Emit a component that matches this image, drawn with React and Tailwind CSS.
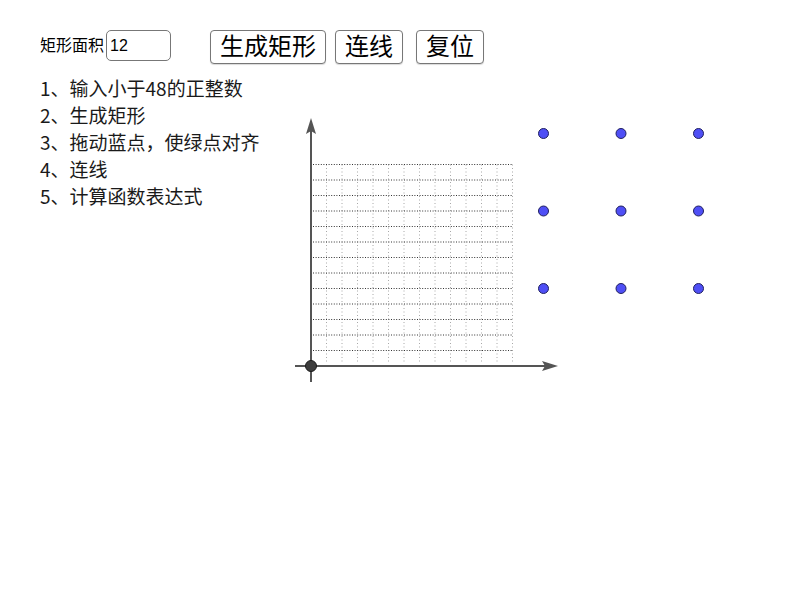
import React from 'react';

const U = 15.5;
const OX = 311;
const OY = 366;

function Graph() {
  const steps = Array.from({ length: 13 }, (_, i) => i + 1);
  const points = [];
  for (const y of [15, 10, 5]) {
    for (const x of [15, 20, 25]) points.push([OX + x * U, OY - y * U]);
  }
  return (
    <svg width="430" height="326" viewBox="290 74 430 326" className="block">
      {steps.map((k) => (
        <line
          key={'v' + k}
          x1={OX + k * U}
          y1={OY - 13 * U}
          x2={OX + k * U}
          y2={OY - 2}
          stroke="#a8a8a8"
          strokeWidth="1"
          strokeDasharray="1 2.5"
        />
      ))}
      {steps.map((k) => (
        <line
          key={'h' + k}
          x1={OX + 2}
          y1={OY - k * U}
          x2={OX + 13 * U}
          y2={OY - k * U}
          stroke="#333"
          strokeWidth="1"
          strokeDasharray="1 1.6"
        />
      ))}
      <line x1="295" y1={OY} x2="546" y2={OY} stroke="#555" strokeWidth="2" />
      <polygon points="558,366 542,361 545,366 542,371" fill="#555" />
      <line x1={OX} y1="382" x2={OX} y2="130" stroke="#555" strokeWidth="2" />
      <polygon points="311,118 306,134 311,131 316,134" fill="#555" />
      <circle cx={OX} cy={OY} r="5.5" fill="#3d3d3d" stroke="#1a1a1a" strokeWidth="1" />
      {points.map(([x, y], i) => (
        <circle key={i} cx={x} cy={y} r="5" fill="#4f4ff5" stroke="#202060" strokeWidth="1" />
      ))}
    </svg>
  );
}

export default function App() {
  const steps = ['1、输入小于48的正整数', '2、生成矩形', '3、拖动蓝点，使绿点对齐', '4、连线', '5、计算函数表达式'];

  return (
    <div
      className="w-[800px] h-[600px] bg-white text-black overflow-hidden"
      style={{ fontFamily: '"Liberation Sans", "Noto Sans CJK SC", sans-serif' }}
    >
      <div className="flex items-start pt-[30px] pl-[40px]">
        <span className="text-[16px] leading-[31px]">矩形面积</span>
        <div className="ml-[2px] w-[65px] h-[31px] border border-[#777] rounded-[5px] flex items-center pl-[3px] text-[16px]">
          12
        </div>
        <button className="ml-[39px] w-[116px] h-[34px] border border-[#777] rounded-[4px] bg-white flex items-center justify-center text-[24px] leading-none shadow-[0_1px_1px_rgba(0,0,0,0.15)]">
          生成矩形
        </button>
        <button className="ml-[9px] w-[68px] h-[34px] border border-[#777] rounded-[4px] bg-white flex items-center justify-center text-[24px] leading-none shadow-[0_1px_1px_rgba(0,0,0,0.15)]">
          连线
        </button>
        <button className="ml-[13px] w-[68px] h-[34px] border border-[#777] rounded-[4px] bg-white flex items-center justify-center text-[24px] leading-none shadow-[0_1px_1px_rgba(0,0,0,0.15)]">
          复位
        </button>
      </div>
      <div className="flex mt-[10px]">
        <ul
          className="w-[290px] shrink-0 pl-[40px] text-[19px] leading-[27px] text-[#1a1a1a]"
          style={{ fontFamily: '"Noto Sans CJK SC", "Liberation Sans", sans-serif' }}
        >
          {steps.map((s) => (
            <li key={s} className="whitespace-nowrap">{s}</li>
          ))}
        </ul>
        <Graph />
      </div>
    </div>
  );
}
